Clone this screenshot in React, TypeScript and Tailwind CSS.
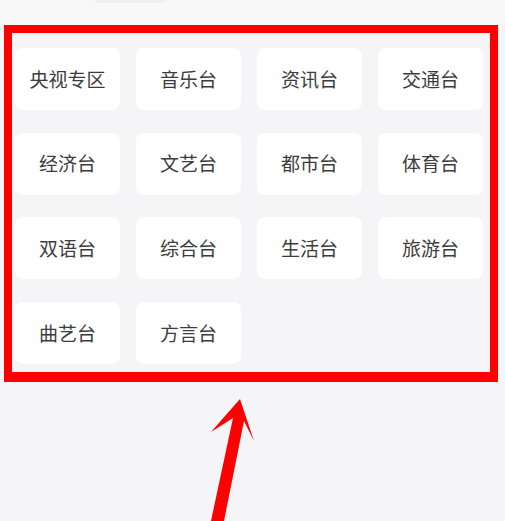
import React from "react";

const items = [
  "央视专区", "音乐台", "资讯台", "交通台",
  "经济台", "文艺台", "都市台", "体育台",
  "双语台", "综合台", "生活台", "旅游台",
  "曲艺台", "方言台",
];

export default function App() {
  return (
    <div
      className="relative w-[505px] h-[521px] overflow-hidden bg-[#f5f5f7]"
      style={{ fontFamily: '"Noto Sans CJK SC", "Noto Sans", sans-serif' }}
    >
      <div className="h-[25px] bg-[#f8f8f9] flex">
        <div className="ml-[95px] w-[70px] h-[3px] bg-[#f0f0f2]" />
      </div>
      <div className="ml-[4px] w-[494px] border-[8px] border-b-[10px] border-[#ff0000] pl-[3px] pr-[7px] pt-[15px] pb-[8px]">
        <div className="grid grid-cols-[repeat(4,105px)] gap-x-[16px] gap-y-[22.7px]">
          {items.map((t) => (
            <div
              key={t}
              className="h-[62px] rounded-[8px] bg-white flex items-center justify-center text-[19px] text-[#3c3c3c]"
            >
              {t}
            </div>
          ))}
        </div>
      </div>
      <svg
        className="absolute left-0 top-0 pointer-events-none"
        width="505"
        height="521"
        viewBox="0 0 505 521"
      >
        <polygon
          points="240,399 254,441 244,421 224,521 211,521 233,418 211,432"
          fill="#ff0000"
        />
      </svg>
    </div>
  );
}
